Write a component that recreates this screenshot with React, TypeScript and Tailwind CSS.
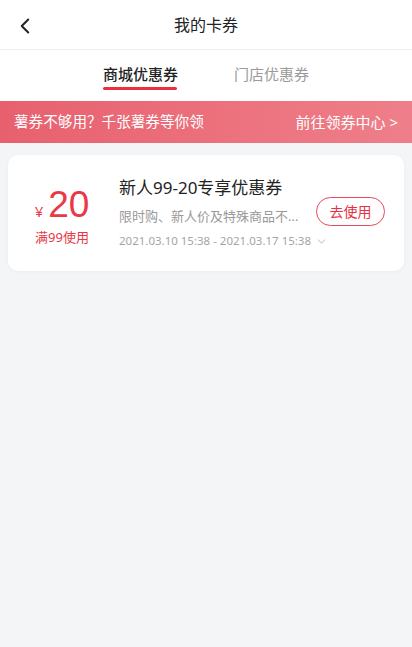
import { ChevronLeft, ChevronDown } from "lucide-react";

const font = { fontFamily: '"Noto Sans", "Noto Sans CJK SC", sans-serif' };

const Header = () => (
  <div className="h-[50px] flex items-center justify-center relative border-b border-[#eeeeee] bg-white">
    <button className="absolute left-[12px] top-[13px] text-[#222]">
      <ChevronLeft size={26} strokeWidth={1.8} />
    </button>
    <p className="text-[16px] text-[#222]">我的卡券</p>
  </div>
);

const Tabs = () => (
  <div className="h-[51px] bg-white flex justify-center gap-[56px] pt-[13px]">
    <div className="flex flex-col items-center">
      <p className="text-[15px] font-medium text-[#222] leading-[22px]">商城优惠券</p>
      <div className="mt-[2px] h-[3px] w-[74px] rounded-full bg-[#e8303f]" />
    </div>
    <div>
      <p className="text-[15px] text-[#9a9a9a] leading-[22px]">门店优惠券</p>
    </div>
  </div>
);

const Banner = () => (
  <div className="h-[42px] flex items-center justify-between px-[14px] bg-gradient-to-r from-[#e8606e] to-[#ee7f8a] text-white">
    <p className="text-[14.6px]">薯券不够用？千张薯券等你领</p>
    <p className="text-[15px]">前往领券中心 &gt;</p>
  </div>
);

const CouponCard = () => (
  <div className="mx-[8px] mt-[12px] h-[116px] bg-white rounded-[10px] shadow-[0_1px_4px_rgba(0,0,0,0.04)] flex items-center">
    <div className="w-[106px] flex flex-col items-center pt-[6px] pl-[2px]">
      <div className="flex items-baseline text-[#e93847]">
        <span className="text-[15px] mr-[5px]">¥</span>
        <span className="text-[37px] leading-[40px]" style={{ fontFamily: '"Liberation Sans", sans-serif' }}>20</span>
      </div>
      <p className="text-[13px] text-[#e93847] mt-[3px]">满99使用</p>
    </div>
    <div className="ml-[5px] flex-1 min-w-0 flex flex-col">
      <p className="text-[17px] text-[#222] leading-[24px]">新人99-20专享优惠券</p>
      <p className="text-[13px] text-[#999] mt-[7px] leading-[18px] whitespace-nowrap">限时购、新人价及特殊商品不...</p>
      <div className="flex items-center mt-[7px] text-[11.5px] text-[#a5a5a5] leading-[18px] whitespace-nowrap">
        <span>2021.03.10 15:38 - 2021.03.17 15:38</span>
        <ChevronDown size={13} strokeWidth={1.5} className="ml-[4px] shrink-0" />
      </div>
    </div>
    <button className="mr-[19px] -mt-[4px] shrink-0 w-[69px] h-[29px] rounded-full border border-[#e8485a] text-[#e8303f] text-[14px] flex items-center justify-center">
      去使用
    </button>
  </div>
);

const App = () => {
  return (
    <div className="w-[412px] h-[647px] bg-[#f4f5f7]" style={font}>
      <Header />
      <Tabs />
      <Banner />
      <CouponCard />
    </div>
  );
};

export default App;
